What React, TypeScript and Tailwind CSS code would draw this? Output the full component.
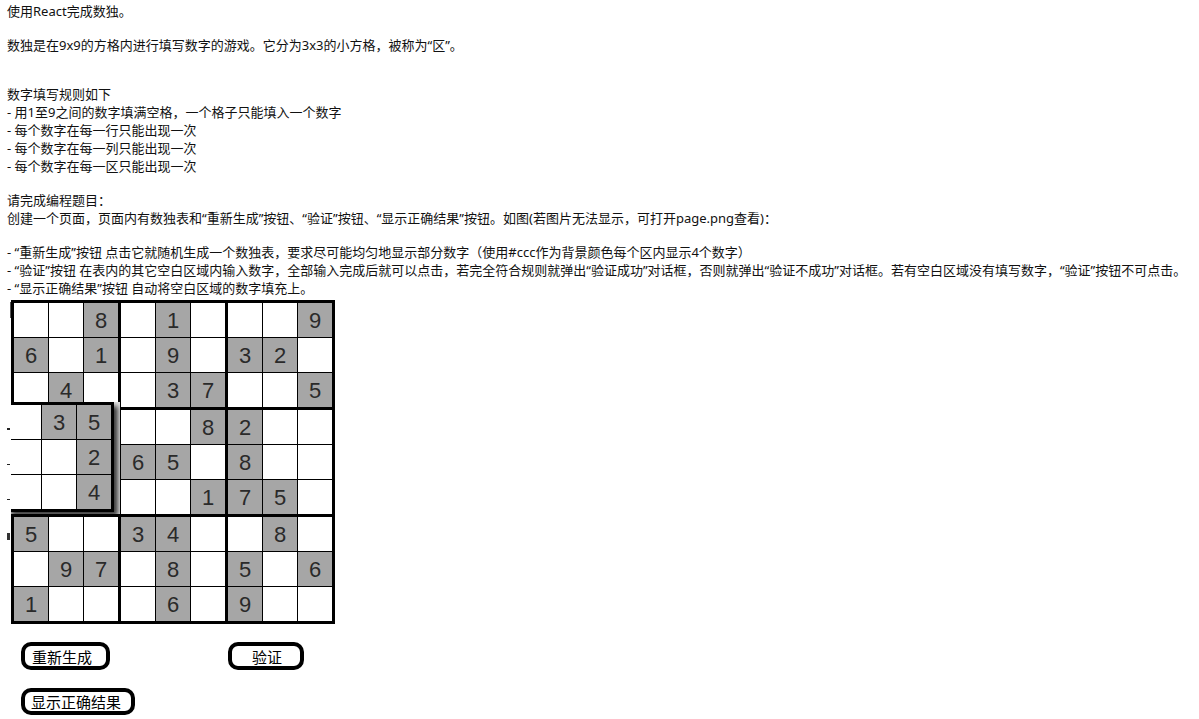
import React from "react";

const GRID: number[][] = [
  [0, 0, 8, 0, 1, 0, 0, 0, 9],
  [6, 0, 1, 0, 9, 0, 3, 2, 0],
  [0, 4, 0, 0, 3, 7, 0, 0, 5],
  [0, 0, 0, 0, 0, 8, 2, 0, 0],
  [0, 0, 0, 6, 5, 0, 8, 0, 0],
  [0, 0, 0, 0, 0, 1, 7, 5, 0],
  [5, 0, 0, 3, 4, 0, 0, 8, 0],
  [0, 9, 7, 0, 8, 0, 5, 0, 6],
  [1, 0, 0, 0, 6, 0, 9, 0, 0],
];

const OVERLAY: number[][] = [
  [0, 3, 5],
  [0, 0, 2],
  [0, 0, 4],
];

function Cell({ v }: { v: number }) {
  return (
    <div
      className={`flex h-[34px] w-[34px] items-center justify-center pt-[2px] font-['Liberation_Sans',Arial,sans-serif] text-[22px] leading-none text-[#2a2a2a] ${
        v ? "bg-[#a6a6a6]" : "bg-white"
      }`}
    >
      {v ? v : ""}
    </div>
  );
}

function Block({ br, bc }: { br: number; bc: number }) {
  const cells: React.ReactNode[] = [];
  for (let r = 0; r < 3; r++) {
    for (let c = 0; c < 3; c++) {
      cells.push(<Cell key={`${r}-${c}`} v={GRID[br * 3 + r][bc * 3 + c]} />);
    }
  }
  return <div className="grid grid-cols-3 gap-px bg-black">{cells}</div>;
}

function Sudoku() {
  const blocks: React.ReactNode[] = [];
  for (let br = 0; br < 3; br++) {
    for (let bc = 0; bc < 3; bc++) {
      blocks.push(<Block key={`${br}-${bc}`} br={br} bc={bc} />);
    }
  }
  return (
    <div className="relative ml-[4px] mt-[3px] w-fit">
      <div className="grid w-fit grid-cols-3 gap-[3px] bg-black p-[3px]">{blocks}</div>
      {/* misaligned pasted block */}
      <div className="absolute left-0 top-[102px] h-[112px] w-[109px] overflow-hidden bg-[#e4e4e4]">
        <div className="ml-[-4px] w-fit border-y-[3px] border-r-[3px] border-black bg-black shadow-[4px_4px_5px_rgba(0,0,0,0.75)]">
          <div className="grid grid-cols-3 gap-px bg-black">
            {OVERLAY.flat().map((v, i) => (
              <Cell key={i} v={v} />
            ))}
          </div>
        </div>
      </div>
      {/* stray marks left of the picture */}
      <div className="absolute left-[-1px] top-[2px] h-[16px] w-[1px] bg-[#555]" />
      <div className="absolute left-[-4px] top-[128px] h-[2px] w-[3px] bg-[#222]" />
      <div className="absolute left-[-4px] top-[164px] h-[1px] w-[3px] bg-[#222]" />
      <div className="absolute left-[-4px] top-[199px] h-[1px] w-[3px] bg-[#222]" />
      <div className="absolute left-[-4px] top-[233px] h-[7px] w-[3px] bg-[#333]" />
    </div>
  );
}

export default function App() {
  return (
    <div className="min-h-screen bg-white pl-[7px] font-['Noto_Sans','Noto_Sans_CJK_SC',sans-serif] text-[13px] leading-[18px] text-[#111]">
      <div className="pt-[2px]">使用React完成数独。</div>
      <div className="mt-[16px]">数独是在9x9的方格内进行填写数字的游戏。它分为3x3的小方格，被称为“区”。</div>
      <div className="mt-[31px]">数字填写规则如下</div>
      <div>- 用1至9之间的数字填满空格，一个格子只能填入一个数字</div>
      <div>- 每个数字在每一行只能出现一次</div>
      <div>- 每个数字在每一列只能出现一次</div>
      <div>- 每个数字在每一区只能出现一次</div>
      <div className="mt-[16px]">请完成编程题目：</div>
      <div className="whitespace-nowrap">
        创建一个页面，页面内有数独表和“重新生成”按钮、“验证”按钮、“显示正确结果”按钮。如图(若图片无法显示，可打开page.png查看)：
      </div>
      <div className="mt-[16px] whitespace-nowrap">
        - “重新生成”按钮 点击它就随机生成一个数独表，要求尽可能均匀地显示部分数字（使用#ccc作为背景颜色每个区内显示4个数字）
      </div>
      <div className="whitespace-nowrap">
        - “验证”按钮 在表内的其它空白区域内输入数字，全部输入完成后就可以点击，若完全符合规则就弹出“验证成功”对话框，否则就弹出“验证不成功”对话框。若有空白区域没有填写数字，“验证”按钮不可点击。
      </div>
      <div className="whitespace-nowrap">- “显示正确结果”按钮 自动将空白区域的数字填充上。</div>

      <Sudoku />

      <div className="mt-[18px] flex items-start">
        <button className="ml-[14px] flex h-[28px] w-[89px] items-center rounded-[10px] border-[4px] border-black bg-white pl-[7px] font-['Noto_Sans_CJK_SC',sans-serif] text-[15px] leading-none text-black">
          重新生成
        </button>
        <button className="ml-[118px] flex h-[28px] w-[76px] items-center justify-center rounded-[10px] border-[4px] border-black bg-white pl-[2px] font-['Noto_Sans_CJK_SC',sans-serif] text-[15px] leading-none text-black">
          验证
        </button>
      </div>
      <div className="mt-[18px]">
        <button className="ml-[14px] flex h-[27px] w-[114px] items-center rounded-[10px] border-[4px] border-black bg-white pl-[6px] font-['Noto_Sans_CJK_SC',sans-serif] text-[15px] leading-none text-black">
          显示正确结果
        </button>
      </div>
    </div>
  );
}
